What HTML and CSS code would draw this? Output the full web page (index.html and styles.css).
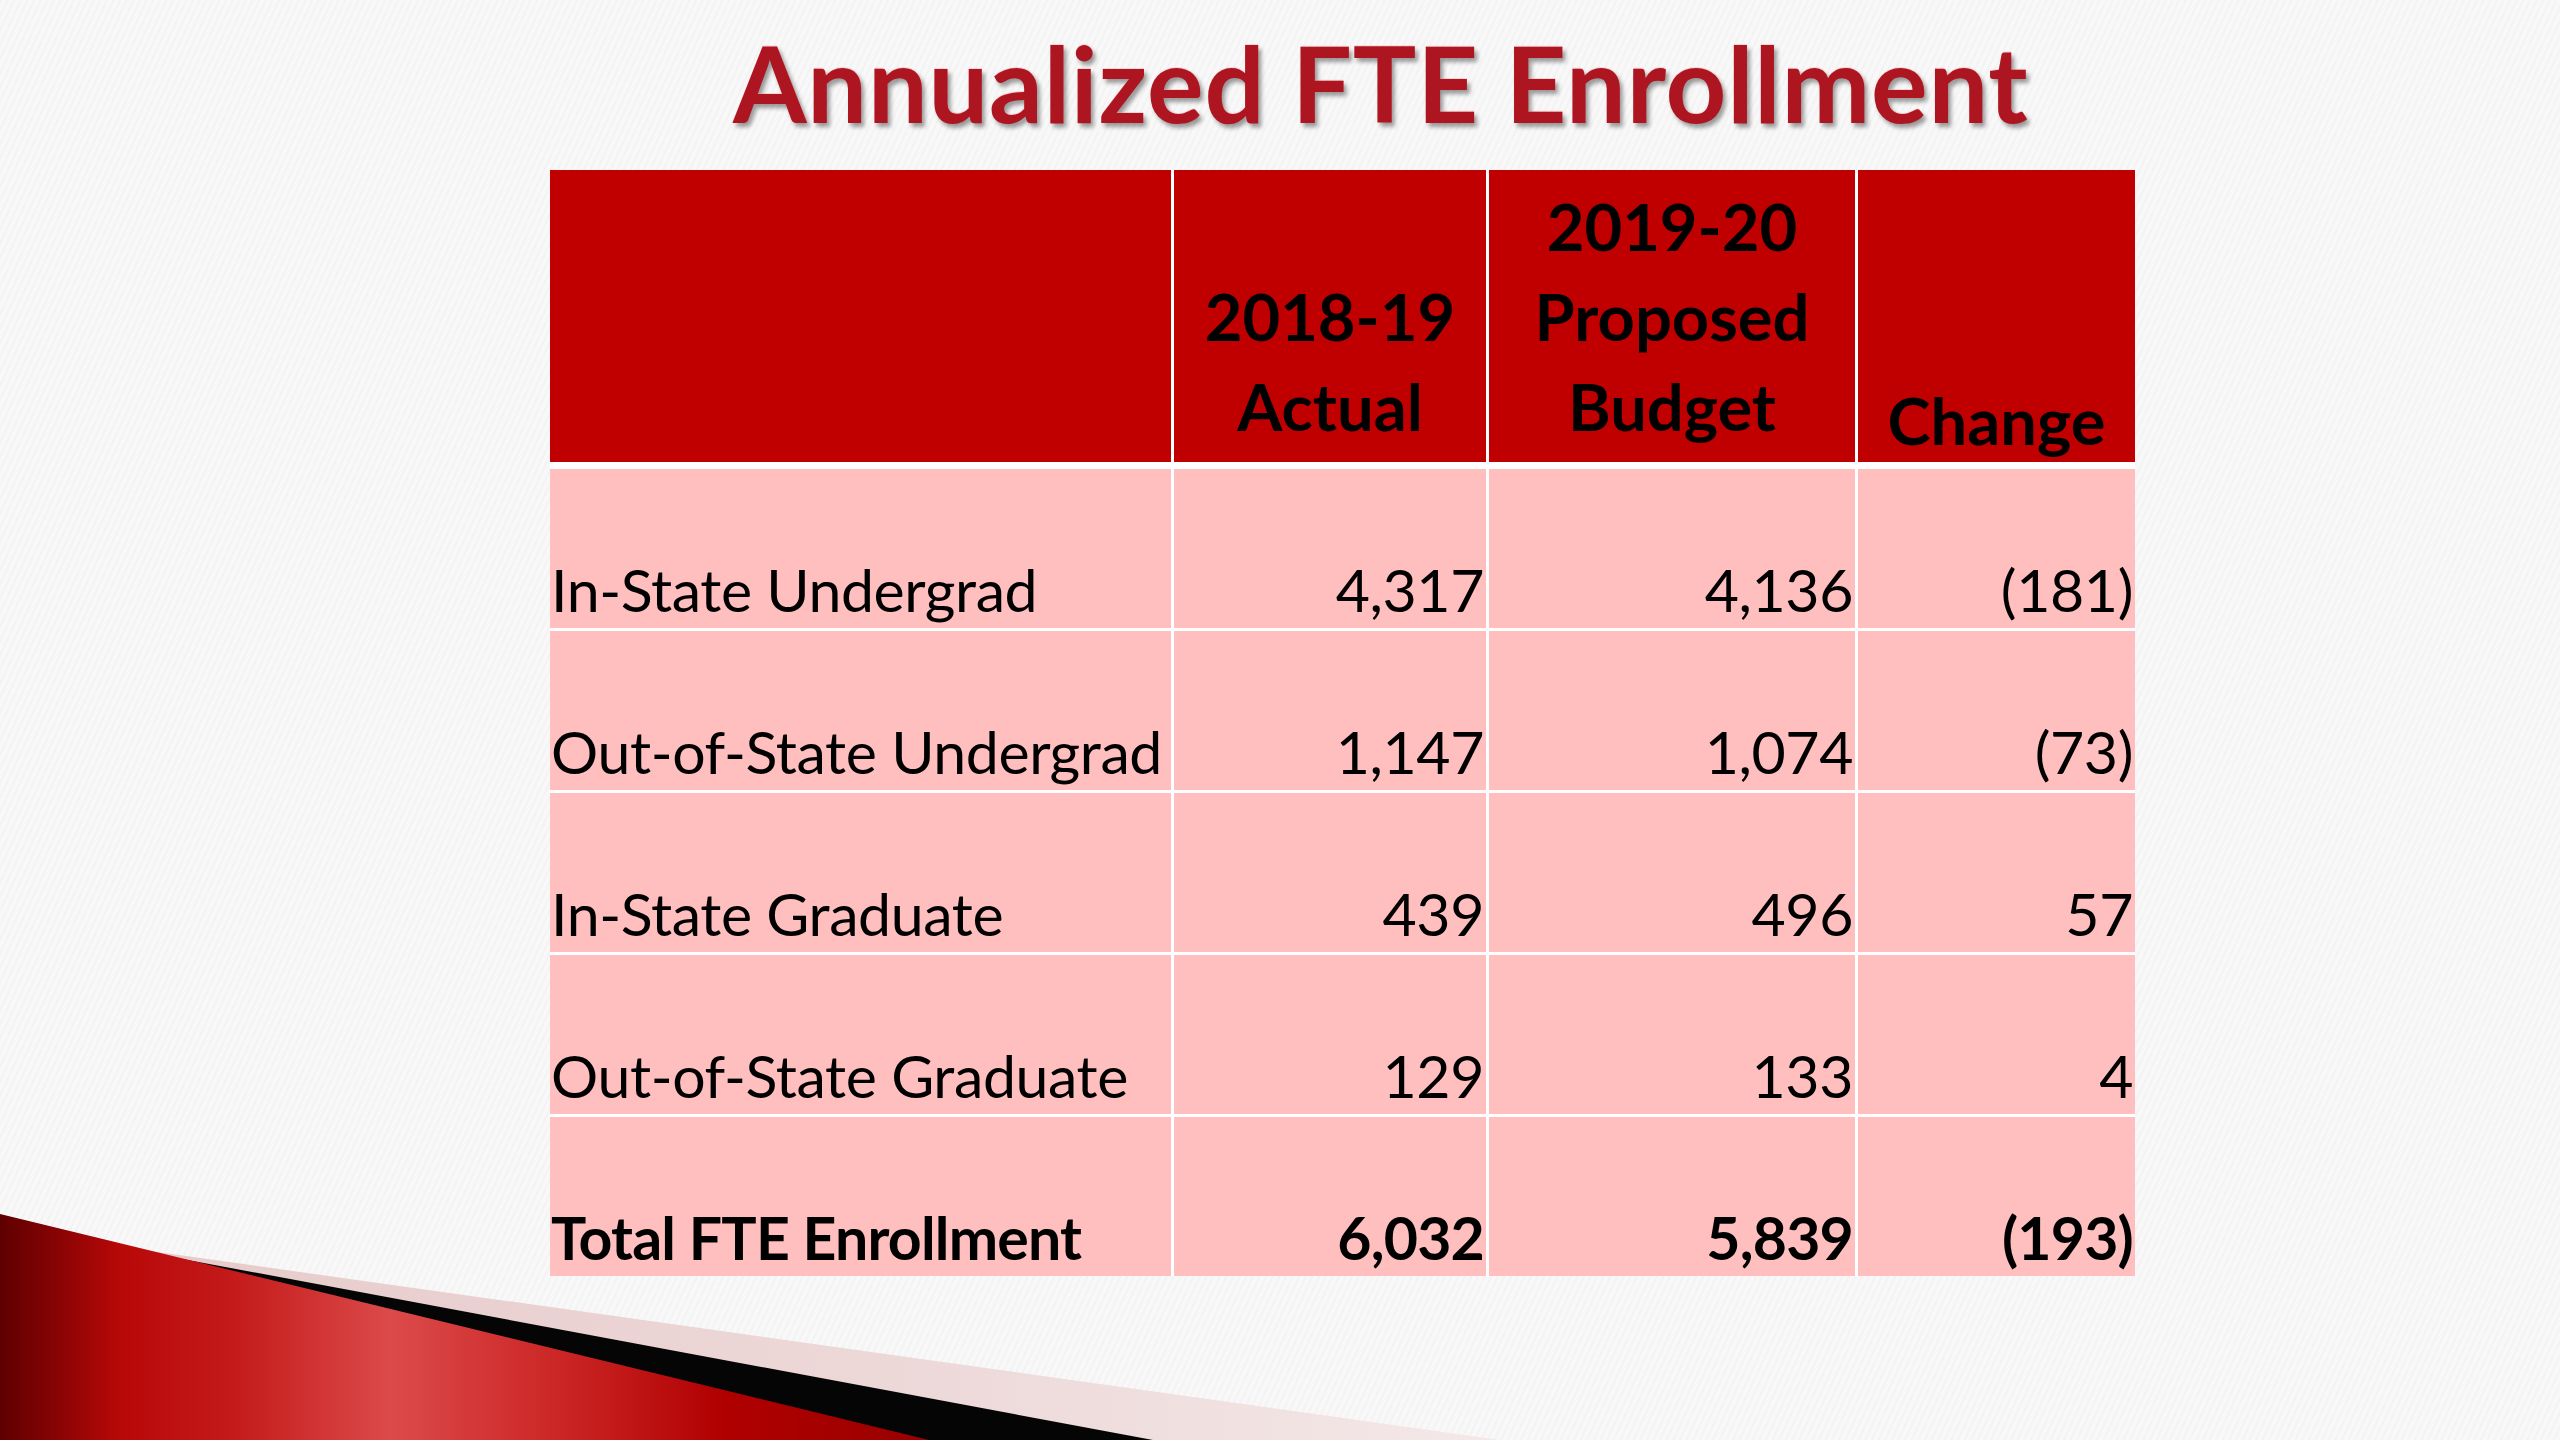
FILE: index.html
```
<!DOCTYPE html>
<html lang="en">
<head>
<meta charset="utf-8">
<title>Annualized FTE Enrollment</title>
<link rel="stylesheet" href="styles.css">
</head>
<body>
<div class="slide">
  <h1 class="title">Annualized FTE Enrollment</h1>
  <div class="grid" role="table">
    <div class="hcell" role="columnheader"></div>
    <div class="hcell" role="columnheader"><span>2018-19</span><span>Actual</span></div>
    <div class="hcell" role="columnheader"><span>2019-20</span><span>Proposed</span><span>Budget</span></div>
    <div class="hcell hcell-low" role="columnheader"><span>Change</span></div>

    <div class="cell label">In-State Undergrad</div>
    <div class="cell num">4,317</div>
    <div class="cell num">4,136</div>
    <div class="cell num">(181)</div>

    <div class="cell label">Out-of-State Undergrad</div>
    <div class="cell num">1,147</div>
    <div class="cell num">1,074</div>
    <div class="cell num">(73)</div>

    <div class="cell label">In-State Graduate</div>
    <div class="cell num">439</div>
    <div class="cell num">496</div>
    <div class="cell num">57</div>

    <div class="cell label">Out-of-State Graduate</div>
    <div class="cell num">129</div>
    <div class="cell num">133</div>
    <div class="cell num">4</div>

    <div class="cell label total">Total FTE Enrollment</div>
    <div class="cell num total">6,032</div>
    <div class="cell num total">5,839</div>
    <div class="cell num total">(193)</div>
  </div>
  <svg class="deco" width="1600" height="260" viewBox="0 1180 1600 260" xmlns="http://www.w3.org/2000/svg">
    <defs>
      <linearGradient id="redg" x1="0" y1="0" x2="930" y2="0" gradientUnits="userSpaceOnUse">
        <stop offset="0" stop-color="#5e0000"/>
        <stop offset="0.13" stop-color="#b80808"/>
        <stop offset="0.25" stop-color="#c41a1a"/>
        <stop offset="0.42" stop-color="#dc4a4a"/>
        <stop offset="0.6" stop-color="#cc2626"/>
        <stop offset="0.78" stop-color="#b00000"/>
        <stop offset="1" stop-color="#9a0000"/>
      </linearGradient>
      <linearGradient id="pinkg" x1="0" y1="0" x2="1500" y2="0" gradientUnits="userSpaceOnUse">
        <stop offset="0" stop-color="#e6c8c8"/>
        <stop offset="0.6" stop-color="#edd8d8"/>
        <stop offset="1" stop-color="#f4e8e8"/>
      </linearGradient>
    </defs>
    <polygon points="0,1230 1500,1440 0,1440" fill="url(#pinkg)"/>
    <polygon points="0,1225 1153,1440 0,1440" fill="#050505"/>
    <polygon points="0,1214 929,1440 0,1440" fill="url(#redg)"/>
  </svg>
</div>
</body>
</html>
```
FILE: styles.css
```
html, body {
  margin: 0;
  padding: 0;
}

body {
  background-color: #f8f8f8;
  background-image: repeating-linear-gradient(115deg, rgba(0,0,0,0.018) 0 2px, rgba(255,255,255,0) 2px 6px);
  font-family: Lato, "Open Sans", "Liberation Sans", sans-serif;
}

.slide {
  position: relative;
  width: 2560px;
  height: 1440px;
  overflow: hidden;
  padding-top: 30px;
  box-sizing: border-box;
}

.title {
  margin: 0 0 35px 733px;
  font-size: 106px;
  line-height: 105px;
  font-weight: 700;
  letter-spacing: 0.8px;
  color: #ad1620;
  white-space: nowrap;
  text-shadow: 0 -1px 0 rgba(255,150,150,0.35), 3px 4px 4px rgba(0,0,0,0.38);
}

.grid {
  margin-left: 550px;
  width: 1585px;
  display: grid;
  grid-template-columns: 621px 312px 366px 277px;
  grid-template-rows: 296px repeat(5, 159px);
  column-gap: 3px;
  row-gap: 3px;
  background: #ffffff;
}

.hcell {
  background: #c00000;
  margin-bottom: 4px;
  display: flex;
  flex-direction: column;
  justify-content: flex-end;
  align-items: center;
  padding-bottom: 11px;
  font-size: 65px;
  line-height: 90px;
  font-weight: 700;
  color: #000;
}

.hcell-low {
  padding-bottom: 6px;
  line-height: 72px;
}

.cell {
  background: #ffbfbf;
  display: flex;
  flex-direction: column;
  justify-content: flex-end;
  font-size: 59px;
  line-height: 77px;
  letter-spacing: -0.4px;
  padding-bottom: 0;
  color: #000;
  white-space: nowrap;
}

.label {
  padding-left: 1px;
  align-items: flex-start;
}

.num {
  padding-right: 2px;
  align-items: flex-end;
}

.total {
  font-weight: 700;
  letter-spacing: -0.8px;
}

.deco {
  position: absolute;
  left: 0;
  bottom: 0;
  display: block;
}
```
